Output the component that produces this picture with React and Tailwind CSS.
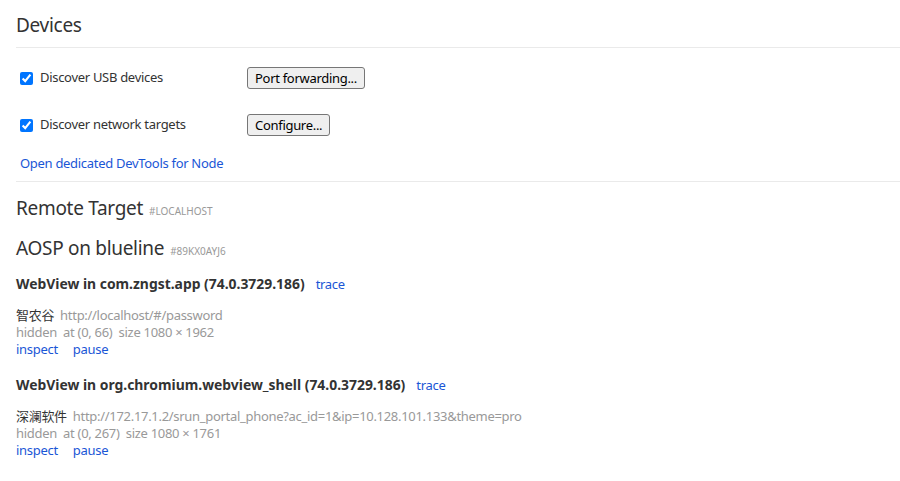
import React from "react";

const font = { fontFamily: '"Noto Sans", "Noto Sans CJK SC", sans-serif' };

function Btn({ children }) {
  return (
    <button className="h-[22px] px-[7px] text-[13px] tracking-[-0.3px] leading-[20px] text-black bg-[#efefef] border border-[#767676] rounded-[3px]">
      {children}
    </button>
  );
}

function Check({ label, btn }) {
  return (
    <div className="flex items-center h-[22px]">
      <div className="w-[231px] flex items-center">
        <input type="checkbox" checked readOnly className="w-[13px] h-[13px] ml-[4px] mr-[7px] accent-[#0075ff]" />
        <span className="text-[13px] tracking-[-0.3px] text-[#333]">{label}</span>
      </div>
      <Btn>{btn}</Btn>
    </div>
  );
}

function Target({ title, name, url, info }) {
  return (
    <div className="flex flex-col">
      <div className="flex items-center h-[16px] leading-[16px]">
        <span className="font-bold text-[13.9px] text-[#333]">{title}</span>
        <span className="ml-[11px] text-[13px] tracking-[-0.3px] text-[#1a56d6]">trace</span>
      </div>
      <div className="mt-[15px] flex items-center h-[17px] text-[13px] tracking-[-0.3px] leading-[17px]">
        <span className="text-[#333]">{name}</span>
        <span className="ml-[6px] text-[#999]">{url}</span>
      </div>
      <div className="h-[17px] text-[13px] tracking-[-0.3px] leading-[17px] text-[#999] whitespace-pre">{info}</div>
      <div className="h-[17px] text-[13px] tracking-[-0.3px] leading-[17px] text-[#1a56d6] flex">
        <span>inspect</span>
        <span className="ml-[15px]">pause</span>
      </div>
    </div>
  );
}

export default function App() {
  return (
    <div className="w-[900px] h-[481px] bg-white pl-4 overflow-hidden" style={font}>
      <div className="pt-[11px] h-[48px] border-b border-[#eaeaea]">
        <div className="text-[19px] tracking-[-0.3px] leading-[28px] text-[#333]">Devices</div>
      </div>
      <div className="mt-[19px] flex flex-col gap-[25px]">
        <Check label="Discover USB devices" btn="Port forwarding..." />
        <Check label="Discover network targets" btn="Configure..." />
      </div>
      <div className="mt-[19px] pl-[4px] h-[16px] text-[13px] tracking-[-0.3px] leading-[16px] text-[#1a56d6]">
        Open dedicated DevTools for Node
      </div>
      <div className="mt-[10px] border-t border-[#eaeaea]"></div>
      <div className="mt-[12px] flex items-baseline h-[28px] leading-[28px]">
        <span className="text-[19px] tracking-[-0.3px] text-[#333]">Remote Target</span>
        <span className="ml-[6px] text-[10px] text-[#999]">#LOCALHOST</span>
      </div>
      <div className="mt-[12px] flex items-baseline h-[28px] leading-[28px]">
        <span className="text-[19px] tracking-[-0.3px] text-[#333]">AOSP on blueline</span>
        <span className="ml-[6px] text-[10px] text-[#999]">#89KX0AYJ6</span>
      </div>
      <div className="mt-[14px] flex flex-col gap-[19px]">
        <Target
          title="WebView in com.zngst.app (74.0.3729.186)"
          name="智农谷"
          url="http://localhost/#/password"
          info="hidden  at (0, 66)  size 1080 × 1962"
        />
        <Target
          title="WebView in org.chromium.webview_shell (74.0.3729.186)"
          name="深澜软件"
          url="http://172.17.1.2/srun_portal_phone?ac_id=1&ip=10.128.101.133&theme=pro"
          info="hidden  at (0, 267)  size 1080 × 1761"
        />
      </div>
    </div>
  );
}
